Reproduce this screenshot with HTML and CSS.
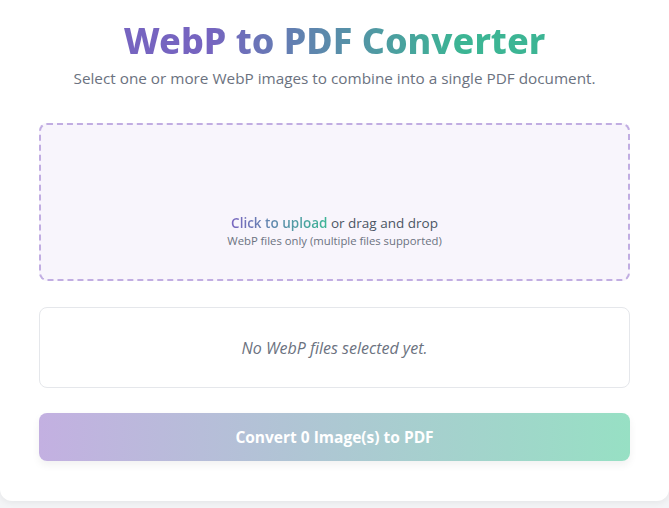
FILE: index.html
```html
<!DOCTYPE html>
<html lang="en">
<head>
<meta charset="utf-8">
<title>WebP to PDF Converter</title>
<link rel="stylesheet" href="styles.css">
</head>
<body>
<main class="card">
  <h1 class="title">WebP to PDF Converter</h1>
  <p class="subtitle">Select one or more WebP images to combine into a single PDF document.</p>
  <label class="dropzone">
    <span class="drop-main"><span class="drop-link">Click to upload</span> or drag and drop</span>
    <span class="drop-hint">WebP files only (multiple files supported)</span>
  </label>
  <div class="filelist">
    <p class="empty">No WebP files selected yet.</p>
  </div>
  <button class="convert">Convert 0 Image(s) to PDF</button>
</main>
</body>
</html>
```
FILE: styles.css
```css
html, body {
  margin: 0;
  padding: 0;
}
body {
  background: #f3f4f6;
  font-family: "Open Sans", "Noto Sans", sans-serif;
  height: 508px;
  overflow: hidden;
}
.card {
  box-sizing: border-box;
  width: 669px;
  height: 501px;
  background: #ffffff;
  border-radius: 0 0 12px 12px;
  box-shadow: 0 2px 6px rgba(0, 0, 0, 0.06);
  padding: 17px 39px 0;
  display: flex;
  flex-direction: column;
}
.title {
  margin: 0;
  text-align: center;
  font-family: "Noto Sans", sans-serif;
  font-weight: 800;
  font-size: 36px;
  line-height: 48px;
  background: linear-gradient(90deg, #7664c0 20%, #3cb594 80%);
  -webkit-background-clip: text;
  background-clip: text;
  color: transparent;
  align-self: center;
}
.subtitle {
  margin: 2px 0 0;
  text-align: center;
  color: #6b7280;
  font-size: 15.3px;
  line-height: 22px;
}
.dropzone {
  margin-top: 34px;
  height: 158px;
  box-sizing: border-box;
  border: 2px dashed #c1ade2;
  border-radius: 8px;
  background: #f8f5fc;
  display: flex;
  flex-direction: column;
  align-items: center;
  justify-content: flex-end;
  padding-bottom: 30px;
  cursor: pointer;
}
.drop-main {
  font-size: 13.5px;
  line-height: 20px;
  color: #4b5563;
}
.drop-link {
  font-weight: 600;
  background: linear-gradient(90deg, #7a66c0, #3db596);
  -webkit-background-clip: text;
  background-clip: text;
  color: transparent;
}
.drop-hint {
  font-size: 11.3px;
  line-height: 16px;
  color: #6b7280;
}
.filelist {
  margin-top: 26px;
  height: 81px;
  box-sizing: border-box;
  border: 1px solid #e5e7eb;
  border-radius: 8px;
  display: flex;
  align-items: center;
  justify-content: center;
}
.empty {
  margin: 0;
  font-style: italic;
  color: #6b7280;
  font-size: 16px;
}
.convert {
  margin-top: 25px;
  height: 48px;
  border: none;
  border-radius: 8px;
  background: linear-gradient(90deg, #c3b0e1, #97e0c4);
  color: #ffffff;
  font-family: "Open Sans", "Noto Sans", sans-serif;
  font-weight: 700;
  font-size: 15.5px;
  box-shadow: 0 4px 8px rgba(0, 0, 0, 0.06);
  cursor: pointer;
}
```
